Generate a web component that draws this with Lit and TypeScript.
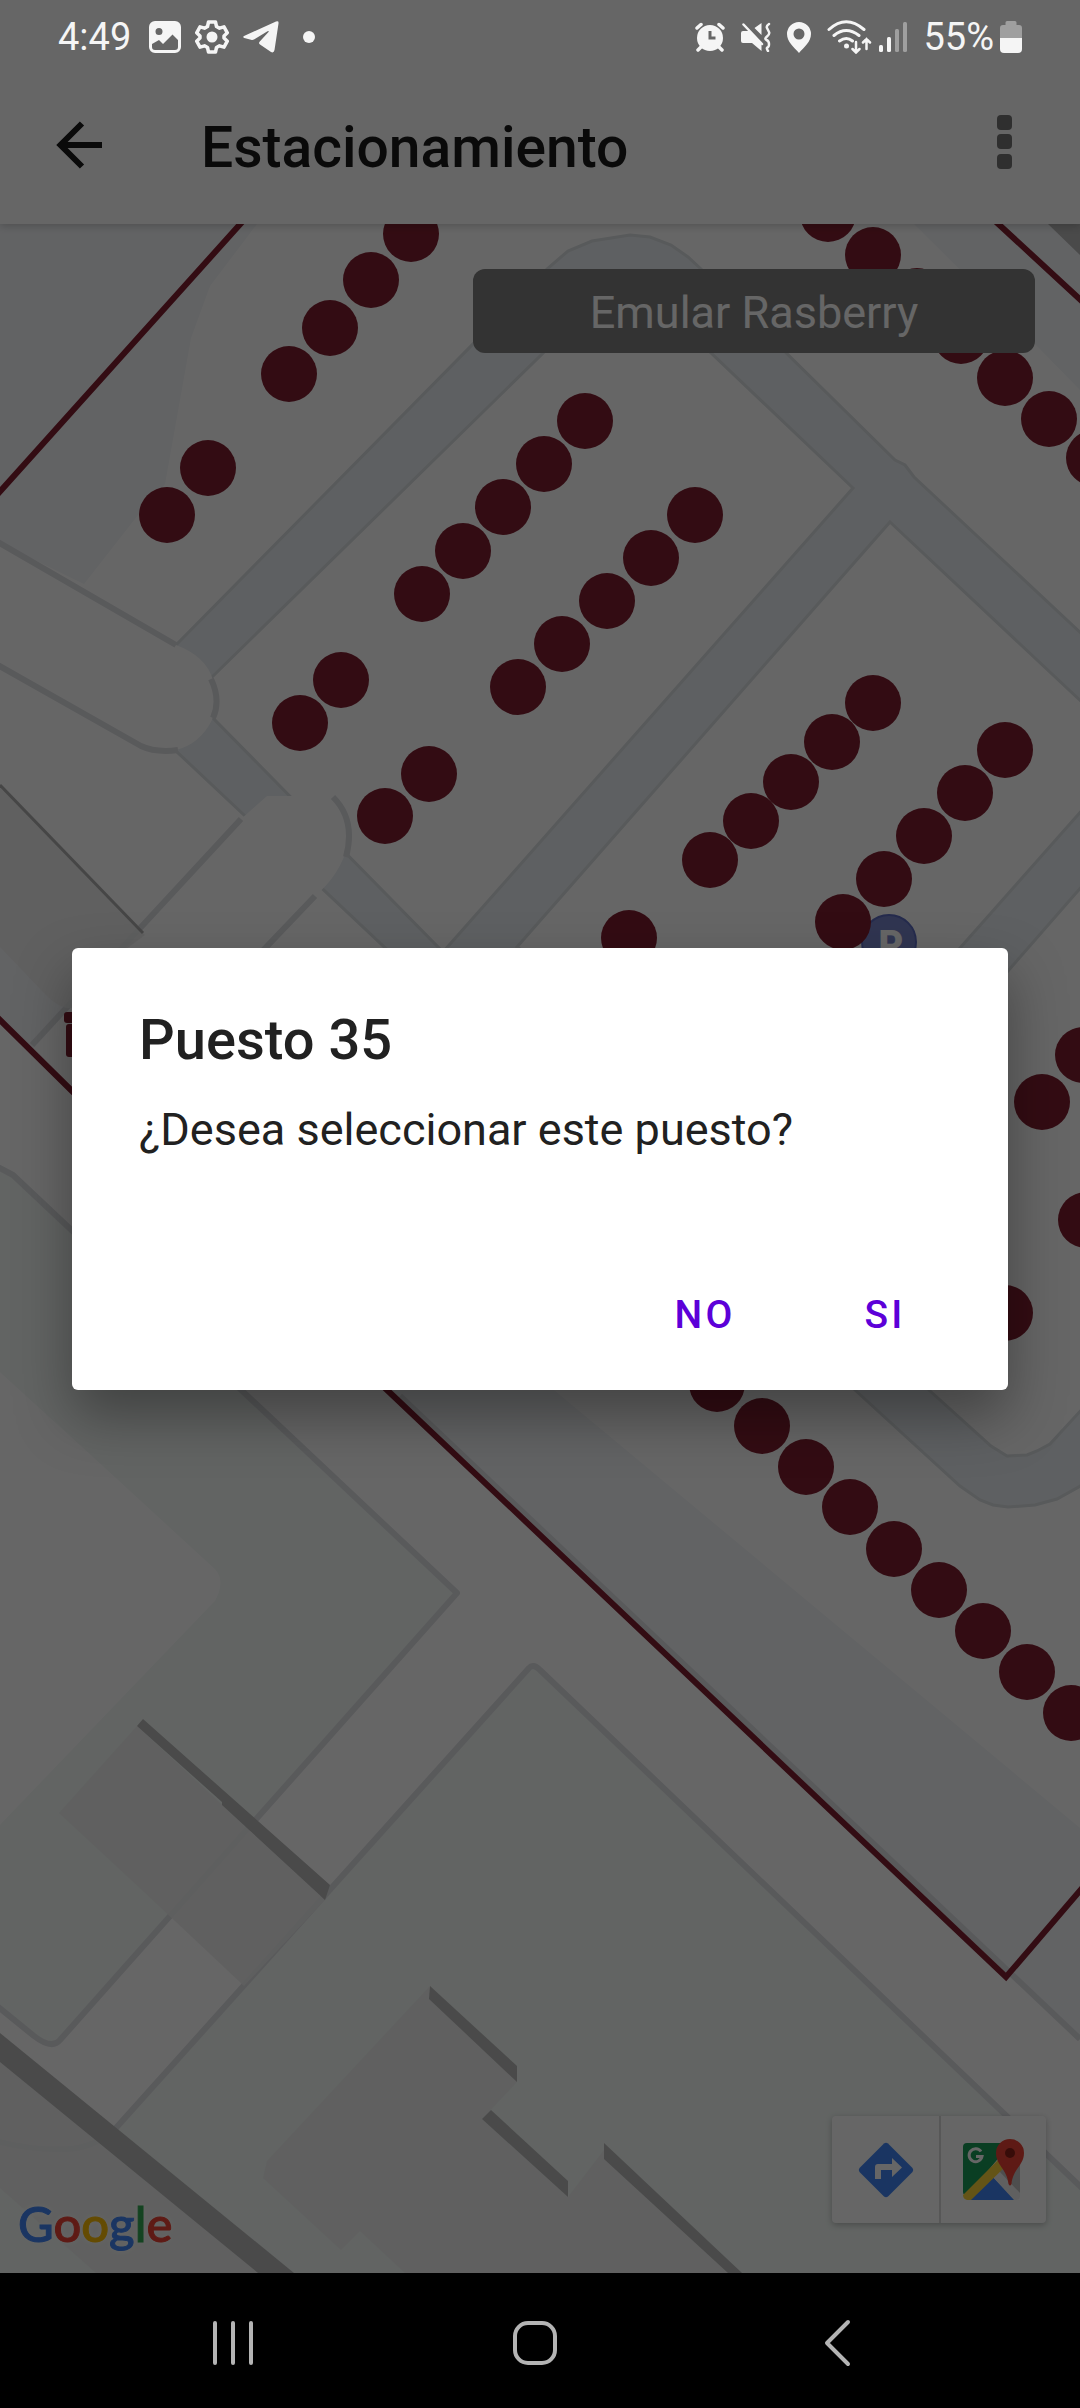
import { LitElement, html, svg, css } from "lit";
import { customElement, property } from "lit/decorators.js";

type Point = [number, number];

/** Parking spots drawn over the map, in map units. */
const SPOTS: Point[] = [
  [411, 234], [371, 280], [330, 328], [289, 374], [208, 468], [167, 515],
  [585, 421], [544, 464], [503, 507], [463, 551], [422, 594], [341, 680], [300, 723],
  [695, 515], [651, 558], [607, 601], [562, 644], [518, 687], [429, 774], [385, 816],
  [828, 214], [873, 255], [917, 296], [961, 336], [1005, 378], [1049, 419], [1094, 458],
  [873, 703], [832, 742], [791, 782], [751, 821], [710, 860], [629, 938],
  [1005, 750], [965, 793], [924, 836], [884, 879], [843, 922],
  [1083, 1055], [1042, 1102], [1086, 1220], [1005, 1313],
  [717, 1384], [762, 1426], [806, 1467], [850, 1507], [894, 1549],
  [939, 1590], [983, 1631], [1027, 1672], [1071, 1713],
];

@customElement("status-bar")
export class StatusBar extends LitElement {
  static styles = css`
    :host {
      display: flex;
      align-items: center;
      justify-content: space-between;
      box-sizing: border-box;
      height: 72px;
      padding: 2px 58px 0;
      color: #f5f5f5;
      font-family: Roboto, "Liberation Sans", sans-serif;
      font-size: 38px;
      line-height: 48px;
    }
    .group {
      display: flex;
      align-items: center;
      gap: 16px;
    }
    .notices {
      gap: 14px;
    }
    .tight {
      gap: 6px;
    }
    .clock {
      padding-right: 4px;
    }
    svg {
      display: block;
      fill: currentColor;
    }
    .line {
      fill: none;
      stroke: currentColor;
    }
  `;

  render() {
    return html`
      <div class="group notices">
        <span class="clock">4:49</span>
        <svg width="32" height="32" viewBox="0 0 32 32" aria-hidden="true">
          <path
            fill-rule="evenodd"
            d="M6 0h20a6 6 0 0 1 6 6v20a6 6 0 0 1-6 6H6a6 6 0 0 1-6-6V6a6 6 0 0 1 6-6zM10 7a3.500 3.500 0 1 0 0 7a3.500 3.500 0 1 0 0-7zM3 23v3q0 3 3 3h20q3 0 3-3v-7l-5.500-5.500L14 23l-4-4z"
          />
        </svg>
        <svg width="34" height="34" viewBox="0 0 34 34" aria-hidden="true">
          <path
            class="line"
            stroke-width="3.500"
            stroke-linejoin="round"
            d="M13.500 2h7l1 4.500 3 1.700 4.500-1.400 3.300 6-3.300 3.200v2l3.300 3.200-3.300 6-4.500-1.400-3 1.700-1 4.500h-7l-1-4.500-3-1.700L5 27.200l-3.300-6L5 18v-2l-3.300-3.200 3.300-6 4.500 1.400 3-1.700z"
          />
          <circle cx="17" cy="17" r="5.500" />
        </svg>
        <svg width="36" height="32" viewBox="0 0 36 32" aria-hidden="true">
          <path
            d="M1 15L33 .5q3-1 2.500 2L31.500 29q-.7 3.500-3.500 2L17 23.500q-2-1.400 0-3.200L25.500 11q.8-1.600-1-.7L11 18.500q-1.500.8-3 .2L1.300 17q-2-.8-.3-2z"
          />
        </svg>
        <svg width="44" height="12" viewBox="0 0 44 12" aria-hidden="true">
          <circle cx="16" cy="6" r="6" />
        </svg>
      </div>
      <div class="group">
        <svg width="30" height="30" viewBox="0 0 30 30" aria-hidden="true">
          <path
            fill-rule="evenodd"
            d="M15 3a13 13 0 1 1 0 26a13 13 0 1 1 0-26zM13.500 9v8.500h7v-3h-4V9z"
          />
          <path
            class="line"
            stroke-width="3.500"
            stroke-linecap="round"
            d="M2 6l4-3.500M28 6l-4-3.500M6 25l-3 3M24 25l3 3"
          />
        </svg>
        <svg width="30" height="30" viewBox="0 0 30 30" aria-hidden="true">
          <path d="M2 9h6l12.500 13v7L11 21H2q-2 0-2-2v-8q0-2 2-2zM20.500 1v12l-7-7z" />
          <path
            class="line"
            stroke-width="2.500"
            stroke-linecap="round"
            d="M2.500 2.500L21 22M28 2q-3 2-2 4t2 4-2 4.500-.5 3.500 2.500 4-1.500 3.500.5 3.500"
          />
        </svg>
        <svg width="24" height="31" viewBox="0 0 24 31" aria-hidden="true">
          <path
            fill-rule="evenodd"
            d="M12 0a12 12 0 0 1 12 12c0 8-7 13-12 19C7 25 0 20 0 12A12 12 0 0 1 12 0zM12 6.500a5.500 5.500 0 1 0 0 11a5.500 5.500 0 1 0 0-11z"
          />
        </svg>
        <div class="group tight">
          <svg width="46" height="34" viewBox="0 0 46 34" aria-hidden="true">
            <g class="line" stroke-width="3" stroke-linecap="round">
              <path d="M2 9.500Q19-6 37 9.500M7 15.500q12-10 25 0M12.500 21q7-5 13 0" />
              <path stroke-width="2.500" d="M29 22v10M25.500 29l3.500 3.500 3.500-3.500M39.500 29V19M36 22.500l3.500-3.500 3.500 3.500" />
            </g>
            <circle cx="19.500" cy="26" r="2.500" />
          </svg>
          <svg width="28" height="30" viewBox="0 0 28 30" aria-hidden="true">
            <rect x="0" y="23" width="4" height="7" rx="1.500" />
            <rect x="8" y="15" width="4" height="15" rx="1.500" />
            <rect x="16" y="7" width="4" height="23" rx="1.500" opacity=".4" />
            <rect x="24" y="0" width="4" height="30" rx="1.500" opacity=".4" />
          </svg>
        </div>
        <div class="group tight">
          <span>55%</span>
          <svg width="22" height="32" viewBox="0 0 22 32" aria-hidden="true">
            <path opacity=".4" d="M7 0h8q1.500 0 1.500 1.500V4H19q3 0 3 3v10H0V7q0-3 3-3h2.500V1.500Q5.500 0 7 0z" />
            <path d="M0 17h22v11q0 4-4 4H4q-4 0-4-4z" />
          </svg>
        </div>
      </div>
    `;
  }
}

@customElement("parking-map")
export class ParkingMap extends LitElement {
  static styles = css`
    :host {
      display: flex;
      flex-direction: column;
      justify-content: space-between;
      position: relative;
      overflow: hidden;
      background: #fff;
    }
    .canvas {
      position: absolute;
      inset: 0;
      width: 100%;
      height: 100%;
    }
    .road {
      fill: #ebf0f4;
    }
    .plot {
      fill: #f5f7fa;
    }
    .block {
      fill: #fff;
    }
    .kerb {
      stroke: #dce0e3;
      stroke-width: 3;
    }
    .path {
      fill: none;
      stroke: #dfe0e4;
      stroke-width: 6;
      stroke-linejoin: round;
    }
    .green {
      fill: #f4faf7;
    }
    .roof {
      fill: #eeeeee;
      fill-opacity: 0.85;
    }
    .wall {
      fill: #b8b8b8;
    }
    .limit {
      fill: none;
      stroke: #802030;
      stroke-width: 6;
    }
    .spot {
      fill: #802030;
    }
    .top,
    .bottom {
      position: relative;
      display: flex;
    }
    .top {
      justify-content: flex-end;
      padding: 45px 45px 0;
    }
    .bottom {
      align-items: flex-end;
      justify-content: space-between;
      padding: 0 34px 24px 18px;
    }
    .emulate {
      width: 54%;
      max-width: 562px;
      flex-basis: 562px;
      height: 84px;
      padding: 4px 0 0;
      border: 0;
      border-radius: 12px;
      background: #7f7f7f;
      color: #fff;
      font-family: Roboto, "Liberation Sans", sans-serif;
      font-size: 45px;
      line-height: 52px;
    }
    .logo {
      font-family: Lato, "Open Sans", sans-serif;
      font-size: 49px;
      font-weight: 500;
      line-height: 52px;
      text-decoration: none;
      text-shadow: 0 0 6px #fff;
      -webkit-text-stroke: 1px currentColor;
    }
    .blue {
      color: #4285f4;
    }
    .red {
      color: #ea4335;
    }
    .yellow {
      color: #fbbc05;
    }
    .leaf {
      color: #34a853;
    }
    .tools {
      display: flex;
      margin-bottom: 26px;
      border-radius: 4px;
      background: #fff;
      box-shadow: 0 2px 6px rgba(0, 0, 0, 0.25);
    }
    .tool {
      display: grid;
      place-items: center;
      width: 107px;
      height: 107px;
      padding: 0;
      border: 0;
      background: none;
    }
    .tool + .tool {
      border-left: 2px solid #dadada;
    }
  `;

  render() {
    return html`
      <svg
        class="canvas"
        viewBox="0 224 1080 2049"
        preserveAspectRatio="xMidYMin slice"
        role="img"
        aria-label="Mapa del estacionamiento"
      >
        <!-- lawns and verges -->
        <path class="plot" d="M0 224H257L210 286L191 338L165 484L138 515L84 584L0 543z" />
        <path class="plot" d="M914 224L1036 345L1080 390V224z" />
        <path class="plot" d="M386 1389L1080 2040V1828L554 1390z" />
        <path class="plot" d="M0 900V1020L32 1050L90 985z" />
        <path class="path" d="M400 1396L1080 2039" />

        <!-- driveways with the blocks they enclose -->
        <path
          class="road kerb"
          d="M176 645L547 269L568 251L592 241L630 235L650 237L671 245L688 257L701 269L895 460L905 465L914 477L1084 636V1484L1057 1499L1035 1505L1008 1507L993 1505L980 1500L960 1486L855 1390L176 751z"
        />
        <path class="block kerb" d="M853 488L626 272L210 679L213 718L443 952z" />
        <path class="block kerb" d="M890 522L1084 704V808L960 948L800 1130L517 947z" />
        <path
          class="block kerb"
          d="M1084 884L1008 971L800 1200L929 1390L991 1446L1007 1456L1027 1455L1037 1451L1050 1444L1084 1407z"
        />

        <!-- footpaths -->
        <path class="block" d="M0 543L176 645Q206 656 213 680Q219 700 212 720Q200 744 176 750L158 751L141 746L0 666z" />
        <path class="path" d="M-4 541L176 645M211 679Q221 700 213 718M-4 664L141 746Q156 753 178 750" />
        <path class="block" d="M241 819L267 796H337Q352 815 348 845Q340 875 315 896L230 990L60 1020z" />
        <path class="path" d="M241 819L32 1045M333 797Q356 820 346 857M315 896L230 985" />

        <!-- lawns -->
        <path class="green" d="M0 1168L13 1175L457 1593L60 2040Q54 2048 34 2036L0 2007z" />
        <path class="block" d="M0 1372L103 1466L215 1569Q226 1581 215 1601L0 1825z" />
        <path class="path" d="M-4 1166L13 1175L457 1593L60 2040Q52 2050 34 2036L-4 2005" />
        <path class="green" d="M533 1665L540 1672L1080 2187V2273H0V2141L69 2149Q95 2147 115 2129z" />
        <path class="path" d="M-4 2141Q34 2151 69 2149Q95 2147 115 2129L529 1668Q533 1663 540 1670L1084 2190" />

        <!-- buildings -->
        <path class="roof" d="M0 784L145 935L125 950L72 1008Q60 1010 43 992L0 947z" />
        <path d="M0 785L143 933" stroke="#b0b0b0" stroke-width="3" />
        <path class="roof" d="M137 1726L59 1813L143 1891L244 1986L325 1900z" />
        <path class="wall" d="M143 1719L330 1885L325 1900L222 1805V1802L137 1726z" />
        <path
          class="roof"
          d="M430 1986L517 2070V2082L482 2119L568 2197L604 2150L742 2273H405L360 2231L341 2250L263 2178L267 2161z"
        />
        <path class="wall" d="M430 1986L517 2066V2082L429 1999z" />
        <path class="wall" d="M491 2110L568 2181V2197L482 2119z" />
        <path class="wall" d="M604 2143L742 2273H728L604 2159z" />
        <path class="roof" d="M0 2050L258 2273H96L0 2188z" />
        <path class="wall" d="M0 2033L294 2273H258L0 2062z" />
        <path class="wall" d="M1048 224H1080V255z" />

        <!-- property limits -->
        <path class="limit" d="M-4 496L243 221M994 220L1084 303" />
        <path class="limit" d="M-4 1016L72 1091L386 1389L1006 1977L1084 1886" />
        <rect class="spot" x="64" y="1012" width="16" height="11" rx="3" />
        <rect class="spot" x="66" y="1024" width="16" height="33" rx="3" />

        <g>
          <circle cx="889" cy="942" r="27" fill="#7986cb" stroke="#5c6bc0" stroke-width="2" />
          <text
            x="891"
            y="958"
            text-anchor="middle"
            font-family="Roboto, sans-serif"
            font-weight="900"
            font-size="38"
            fill="#ffffff"
          >P</text>
        </g>
        ${SPOTS.map(([x, y]) => svg`<circle class="spot" cx=${x} cy=${y} r="28" />`)}
      </svg>

      <div class="top">
        <button class="emulate" type="button">Emular Rasberry</button>
      </div>

      <div class="bottom">
        <a class="logo" href="#google" aria-label="Google"
          ><span class="blue">G</span><span class="red">o</span><span class="yellow">o</span
          ><span class="blue">g</span><span class="leaf">l</span><span class="red">e</span></a
        >
        <div class="tools">
          <button class="tool" type="button" aria-label="Cómo llegar">
            <svg width="56" height="56" viewBox="0 0 56 56" aria-hidden="true">
              <path
                fill="#4285f4"
                d="M26 1.500q2-1.500 4 0L54.500 26q1.500 2 0 4L30 54.500q-2 1.500-4 0L1.500 30q-1.500-2 0-4z"
              />
              <path fill="#fff" d="M17 37V25q0-3 3-3h14v-6l10 9.500-10 9.500v-7H23v9z" />
            </svg>
          </button>
          <button class="tool" type="button" aria-label="Abrir en Google Maps">
            <svg width="62" height="62" viewBox="0 0 62 62" aria-hidden="true">
              <path fill="#1a9b57" d="M4 4h44L4 57q-4-1-4-4V8q0-4 4-4z" />
              <path fill="#c4c4c4" d="M40 24h17v31L34 33z" />
              <path fill="#4285f4" d="M29 37L52 61H6z" />
              <path fill="#f1f1f1" d="M29 37l6-6 22 23v3q0 4-4 4h-2z" />
              <path fill="#fbd23a" d="M36 20l7 7L8 61H4q-4-1-4-5z" />
              <path
                fill="none"
                stroke="#fff"
                stroke-width="3"
                d="M18 12.500a6.500 6.500 0 1 0 1 5h-6"
              />
              <path
                fill="#ea4335"
                d="M47 0a14 14 0 0 1 14 14c0 12-11 16-12.500 31q-1.500 3-3 0C44 30 33 26 33 14A14 14 0 0 1 47 0z"
              />
              <circle cx="47" cy="14" r="5" fill="#8a2018" />
            </svg>
          </button>
        </div>
      </div>
    `;
  }
}

@customElement("confirm-dialog")
export class ConfirmDialog extends LitElement {
  @property() heading = "";
  @property() message = "";

  static styles = css`
    :host {
      display: block;
      color: #212121;
      font-family: Roboto, "Liberation Sans", sans-serif;
    }
    .card {
      padding: 56px 33px 24px 67px;
      border-radius: 6px;
      background: #fff;
      box-shadow: 0 26px 56px rgba(0, 0, 0, 0.35);
    }
    .heading {
      margin: 0 0 18px;
      font-size: 56px;
      font-weight: 500;
      line-height: 72px;
    }
    .message {
      margin: 0 0 98px;
      font-size: 45px;
      line-height: 72px;
    }
    .actions {
      display: flex;
      justify-content: flex-end;
    }
    .action {
      min-width: 180px;
      height: 102px;
      padding: 0 24px;
      border: 0;
      background: none;
      color: #5c00d8;
      font: 500 39px/48px Roboto, "Liberation Sans", sans-serif;
      letter-spacing: 0.08em;
    }
  `;

  render() {
    return html`
      <section class="card" role="alertdialog" aria-labelledby="heading" aria-describedby="message">
        <h2 class="heading" id="heading">${this.heading}</h2>
        <p class="message" id="message">${this.message}</p>
        <div class="actions">
          <button class="action" type="button">NO</button>
          <button class="action" type="button">SI</button>
        </div>
      </section>
    `;
  }
}

@customElement("app-root")
export class AppRoot extends LitElement {
  static styles = css`
    :host {
      display: flex;
      flex-direction: column;
      min-height: 100vh;
      background: #000;
      font-family: Roboto, "Liberation Sans", sans-serif;
    }
    .stage {
      position: relative;
      display: flex;
      flex: 1;
      flex-direction: column;
      background: #fff;
    }
    .status {
      position: relative;
      z-index: 3;
    }
    .bar {
      position: relative;
      z-index: 1;
      display: flex;
      align-items: center;
      height: 152px;
      padding: 0 40px 0 44px;
      background: #fff;
      color: #1a1a1a;
    }
    .bar::before {
      content: "";
      position: absolute;
      inset: 40px 0 0;
      box-shadow: 0 2px 8px rgba(0, 0, 0, 0.2);
      clip-path: inset(0 0 -16px 0);
    }
    .title {
      flex: 1;
      margin: 0 0 0 87px;
      font-size: 57px;
      font-weight: 500;
      line-height: 72px;
    }
    .icon {
      display: grid;
      place-items: center;
      width: 70px;
      height: 70px;
      padding: 0;
      border: 0;
      background: none;
    }
    .icon svg,
    .nav svg {
      display: block;
    }
    .map {
      flex: 1;
    }
    .scrim {
      position: absolute;
      inset: 0;
      z-index: 2;
      display: grid;
      align-items: center;
      padding: 64px 72px 0;
      background: rgba(0, 0, 0, 0.6);
    }
    .nav {
      display: flex;
      justify-content: center;
      box-sizing: border-box;
      height: 135px;
      padding: 4px 10px 0 0;
      background: #000;
    }
    .key {
      display: grid;
      flex: 0 1 302px;
      place-items: center;
      border: 0;
      background: none;
    }
    .glyph {
      fill: none;
      stroke: #b4b4b4;
      stroke-width: 4;
      stroke-linecap: round;
      stroke-linejoin: round;
    }
  `;

  render() {
    return html`
      <div class="stage">
        <status-bar class="status"></status-bar>
        <header class="bar">
          <button class="icon" type="button" aria-label="Volver">
            <svg width="56" height="56" viewBox="0 0 56 56" aria-hidden="true">
              <path
                fill="none"
                stroke="#1a1a1a"
                stroke-width="6"
                d="M51 25H10M31 3.500L9.500 25L31 46.500"
              />
            </svg>
          </button>
          <h1 class="title">Estacionamiento</h1>
          <button class="icon" type="button" aria-label="Más opciones">
            <svg width="16" height="68" viewBox="0 0 16 68" aria-hidden="true">
              <g fill="#757575">
                <rect x="0" y="1" width="15" height="15" rx="4" />
                <rect x="0" y="20" width="15" height="15" rx="4" />
                <rect x="0" y="40" width="15" height="15" rx="4" />
              </g>
            </svg>
          </button>
        </header>
        <parking-map class="map"></parking-map>
        <div class="scrim">
          <confirm-dialog heading="Puesto 35" message="¿Desea seleccionar este puesto?"></confirm-dialog>
        </div>
      </div>
      <nav class="nav" aria-label="Sistema">
        <button class="key" type="button" aria-label="Recientes">
          <svg width="44" height="46" viewBox="0 0 44 46" aria-hidden="true">
            <path class="glyph" d="M4 3v40M22 3v40M40 3v40" />
          </svg>
        </button>
        <button class="key" type="button" aria-label="Inicio">
          <svg width="46" height="46" viewBox="0 0 46 46" aria-hidden="true">
            <rect class="glyph" x="3" y="3" width="40" height="40" rx="13" />
          </svg>
        </button>
        <button class="key" type="button" aria-label="Atrás">
          <svg width="30" height="48" viewBox="0 0 30 48" aria-hidden="true">
            <path class="glyph" d="M26 3L5 24L26 45" />
          </svg>
        </button>
      </nav>
    `;
  }
}
